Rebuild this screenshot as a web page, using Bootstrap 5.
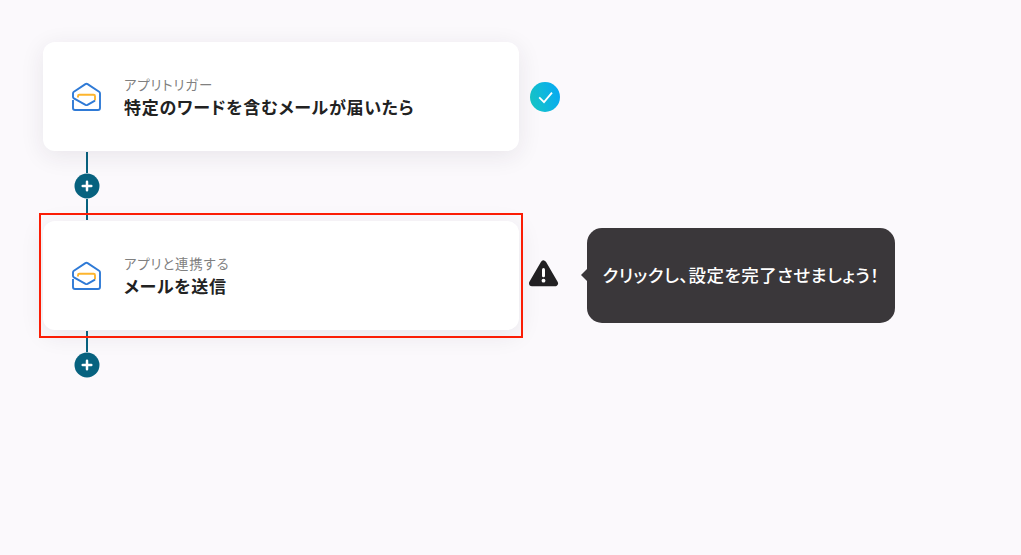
<!DOCTYPE html>
<html lang="ja">

<head>
  <meta charset="UTF-8">
  <meta name="viewport" content="width=device-width, initial-scale=1">
  <title>フロー設定</title>

  <!-- Bootstrap 5 CSS -->
  <link href="https://cdn.jsdelivr.net/npm/bootstrap@5.3.0/dist/css/bootstrap.min.css" rel="stylesheet">

  <!-- Custom styles -->
  <style>
    body {
      background-color: #fbf9fc;
      font-family: "Noto Sans CJK JP", sans-serif;
      font-feature-settings: "palt";
      color: #222;
      overflow: hidden;
    }

    .flow {
      padding: 42px 0 0 43px;
    }

    .step-card {
      width: 476px;
      height: 109px;
      padding-left: 28px;
      border: 0;
      border-radius: 12px;
      box-shadow: 0 5px 24px rgba(40, 35, 50, .09);
    }

    .step-mail {
      width: 31px;
      height: 31px;
      margin-right: 22px;
    }

    .step-label {
      font-size: 13.4px;
      line-height: 20px;
      letter-spacing: .065em;
      color: #808080;
    }

    .step-title {
      font-size: 17px;
      line-height: 25px;
      letter-spacing: .041em;
      font-weight: 700;
    }

    .status-icon {
      width: 30px;
      height: 30px;
      overflow: visible;
    }

    .status-done {
      margin-left: 11px;
    }

    .status-warning {
      margin-left: 9px;
      margin-right: 1px;
    }

    .connector {
      width: 26px;
      height: 68px;
      margin: 1px 0 1px 31px;
    }

    .connector-line {
      width: 2px;
      background-color: #07627f;
    }

    .add-step {
      width: 26px;
      height: 26px;
    }

    .highlight {
      position: absolute;
      top: -8px;
      left: -4px;
      width: 484px;
      height: 125px;
      border: 2px solid #fb1d05;
      pointer-events: none;
    }

    .hint {
      position: relative;
      width: 308px;
      height: 95px;
      margin-left: 28px;
      border-radius: 15px;
      background-color: #3a373a;
      color: #fff;
      font-size: 17.5px;
      letter-spacing: .028em;
      font-weight: 500;
    }

    .hint::before {
      content: "";
      position: absolute;
      left: -6px;
      top: 40px;
      border: 7px solid transparent;
      border-left: 0;
      border-right-color: #3a373a;
    }
  </style>
</head>

<body>

  <!-- Shared icons -->
  <svg class="d-none">
    <symbol id="mail" viewBox="0 0 31 31">
      <path d="M7 16.4V15.2Q7 13.8 8.4 13.8H22.6Q24 13.8 24 15.2V19.6" fill="none" stroke="#fdb52e" stroke-width="1.9" />
      <path d="M2 19V27Q2 29 4 29H27Q29 29 29 27V12.4Q29 11.4 28.1 10.8L16.6 3.1Q15.5 2.4 14.4 3.1L2.9 10.8Q2 11.4 2 12.4V16Q2 16.9 2.9 17.4L14.5 23.9Q15.5 24.4 16.5 23.9L24 19.6" fill="none" stroke="#2f7ad6" stroke-width="1.9" stroke-linejoin="round" />
    </symbol>
    <symbol id="plus" viewBox="0 0 26 26">
      <circle cx="13" cy="13" r="12.5" fill="#07627f" />
      <path d="M13 8.7V17.3M8.7 13H17.3" stroke="#fff" stroke-width="2.5" stroke-linecap="round" />
    </symbol>
  </svg>

  <main class="flow">
    <!-- Trigger step -->
    <div class="d-flex align-items-center">
      <div class="card step-card flex-row align-items-center flex-shrink-0">
        <svg class="step-mail"><use href="#mail" /></svg>
        <div>
          <div class="step-label">アプリトリガー</div>
          <div class="step-title">特定のワードを含むメールが届いたら</div>
        </div>
      </div>
      <svg class="status-icon status-done" viewBox="0 0 30 30">
        <defs>
          <linearGradient id="done" x1="0" y1=".65" x2="1" y2=".35">
            <stop offset="0" stop-color="#17c6c6" />
            <stop offset="1" stop-color="#06a9f2" />
          </linearGradient>
        </defs>
        <circle cx="15" cy="15" r="15" fill="url(#done)" />
        <path d="M9.2 15.3L14 20.2L22 10.7" fill="none" stroke="#fff" stroke-width="1.8" />
      </svg>
    </div>

    <div class="connector d-flex flex-column align-items-center">
      <div class="connector-line flex-grow-1"></div>
      <svg class="add-step flex-shrink-0"><use href="#plus" /></svg>
      <div class="connector-line flex-grow-1"></div>
    </div>

    <!-- Action step -->
    <div class="d-flex align-items-center">
      <div class="card step-card flex-row align-items-center flex-shrink-0">
        <svg class="step-mail"><use href="#mail" /></svg>
        <div>
          <div class="step-label">アプリと連携する</div>
          <div class="step-title">メールを送信</div>
        </div>
        <div class="highlight"></div>
      </div>
      <svg class="status-icon status-warning" viewBox="0 0 30 30">
        <path d="M15.5 2.5L27 22.3H4Z" fill="#222123" stroke="#222123" stroke-width="6" stroke-linejoin="round" />
        <path d="M15.5 8.5V14.8" stroke="#fff" stroke-width="3" stroke-linecap="round" />
        <circle cx="15.5" cy="19.7" r="1.9" fill="#fff" />
      </svg>
      <div class="hint d-flex align-items-center justify-content-center">クリックし、設定を完了させましょう！</div>
    </div>

    <div class="connector d-flex flex-column align-items-center">
      <div class="connector-line flex-grow-1"></div>
      <svg class="add-step flex-shrink-0"><use href="#plus" /></svg>
      <div class="flex-grow-1"></div>
    </div>
  </main>

  <!-- Bootstrap 5 JS and Popper.js -->
  <script src="https://cdn.jsdelivr.net/npm/bootstrap@5.3.0/dist/js/bootstrap.bundle.min.js"></script>
</body>

</html>
